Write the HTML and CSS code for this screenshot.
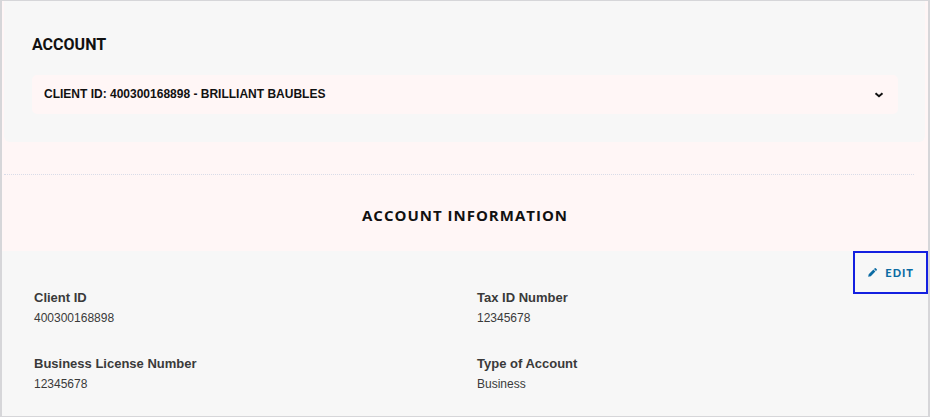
FILE: index.html
```html
<!DOCTYPE html>
<html lang="en">
<head>
  <meta charset="UTF-8">
  <meta name="viewport" content="width=device-width, initial-scale=1.0">
  <title>Account</title>
  <link rel="stylesheet" href="styles.css">
</head>
<body>
  <main class="page">
    <section class="account">
      <h1><label for="clientSelect">Account</label></h1>
      <div class="select-wrap">
        <select id="clientSelect" class="select">
          <option>CLIENT ID: 400300168898 - BRILLIANT BAUBLES</option>
        </select>
        <svg class="chevron" viewBox="0 0 10 6" aria-hidden="true">
          <path d="M1.5 1.2 L5 4.2 L8.5 1.2" fill="none" stroke="#111" stroke-width="2"/>
        </svg>
      </div>
    </section>

    <hr class="divider">

    <h2>Account Information</h2>

    <section class="info">
      <button type="button" class="edit-button">
        <svg class="pencil" viewBox="0 0 10 10" aria-hidden="true">
          <path d="M0.2 9.8 L0.8 6.9 L6 1.8 L8.2 4 L3.1 9.2 Z M6.6 1.2 L7.6 0.2 Q8.1 -0.1 8.6 0.2 L9.8 1.4 Q10.1 1.9 9.8 2.4 L8.8 3.4 Z" fill="currentColor"/>
        </svg>
        <span>Edit</span>
      </button>
      <dl class="details">
        <div>
          <dt>Client ID</dt>
          <dd>400300168898</dd>
        </div>
        <div>
          <dt>Tax ID Number</dt>
          <dd>12345678</dd>
        </div>
        <div>
          <dt>Business License Number</dt>
          <dd>12345678</dd>
        </div>
        <div>
          <dt>Type of Account</dt>
          <dd>Business</dd>
        </div>
      </dl>
    </section>
  </main>
</body>
</html>
```

FILE: styles.css
```css
* {
  box-sizing: border-box;
}
body {
  margin: 0;
  background-color: #fff6f6;
  color: #111;
  font-family: "Liberation Sans", Arial, sans-serif;
}
.page {
  display: flex;
  flex-direction: column;
  min-height: 100vh;
  border: 2px solid #d6d6d9;
  border-width: 1px 2px;
}
.account {
  margin: 0 3px 0 2px;
  padding: 32px 27px 28px 28px;
  background-color: #f7f7f7;
  border-radius: 0 0 6px 6px;
}
h1 {
  margin: 0 0 18px;
  font-family: Roboto, sans-serif;
  font-size: 16px;
  font-weight: 700;
  line-height: 24px;
  text-transform: uppercase;
}
.select-wrap {
  position: relative;
}
.select {
  display: block;
  width: 100%;
  padding: 11px 36px 12px 12px;
  appearance: none;
  background-color: #fff6f6;
  border: 0;
  border-radius: 5px;
  color: #111;
  font-family: inherit;
  font-size: 12px;
  font-weight: 700;
  line-height: 16px;
}
.chevron {
  position: absolute;
  top: 17px;
  right: 14px;
  width: 10px;
  height: 6px;
  pointer-events: none;
}
.divider {
  width: calc(100% - 16px);
  margin: 32px 14px 0 2px;
  border: 0;
  border-top: 1px dotted #d9dce8;
}
h2 {
  margin: 28px 0 24px;
  font-family: "Open Sans", sans-serif;
  font-size: 15px;
  font-weight: 700;
  line-height: 24px;
  letter-spacing: 1px;
  text-align: center;
  text-transform: uppercase;
}
.info {
  position: relative;
  flex: 1;
  padding: 37px 32px 16px;
  background-color: #f7f7f7;
}
.edit-button {
  position: absolute;
  top: 0;
  right: 0;
  display: flex;
  align-items: center;
  gap: 8px;
  padding: 12px 12px 12px 13px;
  background-color: transparent;
  border: 2px solid #1420e0;
  color: #0b6ba3;
  font-family: Lato, sans-serif;
  font-size: 11px;
  font-weight: 900;
  line-height: 15px;
  letter-spacing: 1px;
  text-transform: uppercase;
  cursor: pointer;
}
.pencil {
  width: 9px;
  height: 9px;
}
.details {
  display: grid;
  grid-template-columns: 1fr 1fr;
  gap: 26px 24px;
  margin: 0;
  color: #3a3a3a;
}
dt {
  font-size: 13px;
  font-weight: 700;
  line-height: 20px;
}
dd {
  margin: 0;
  font-size: 12px;
  line-height: 20px;
}
```
